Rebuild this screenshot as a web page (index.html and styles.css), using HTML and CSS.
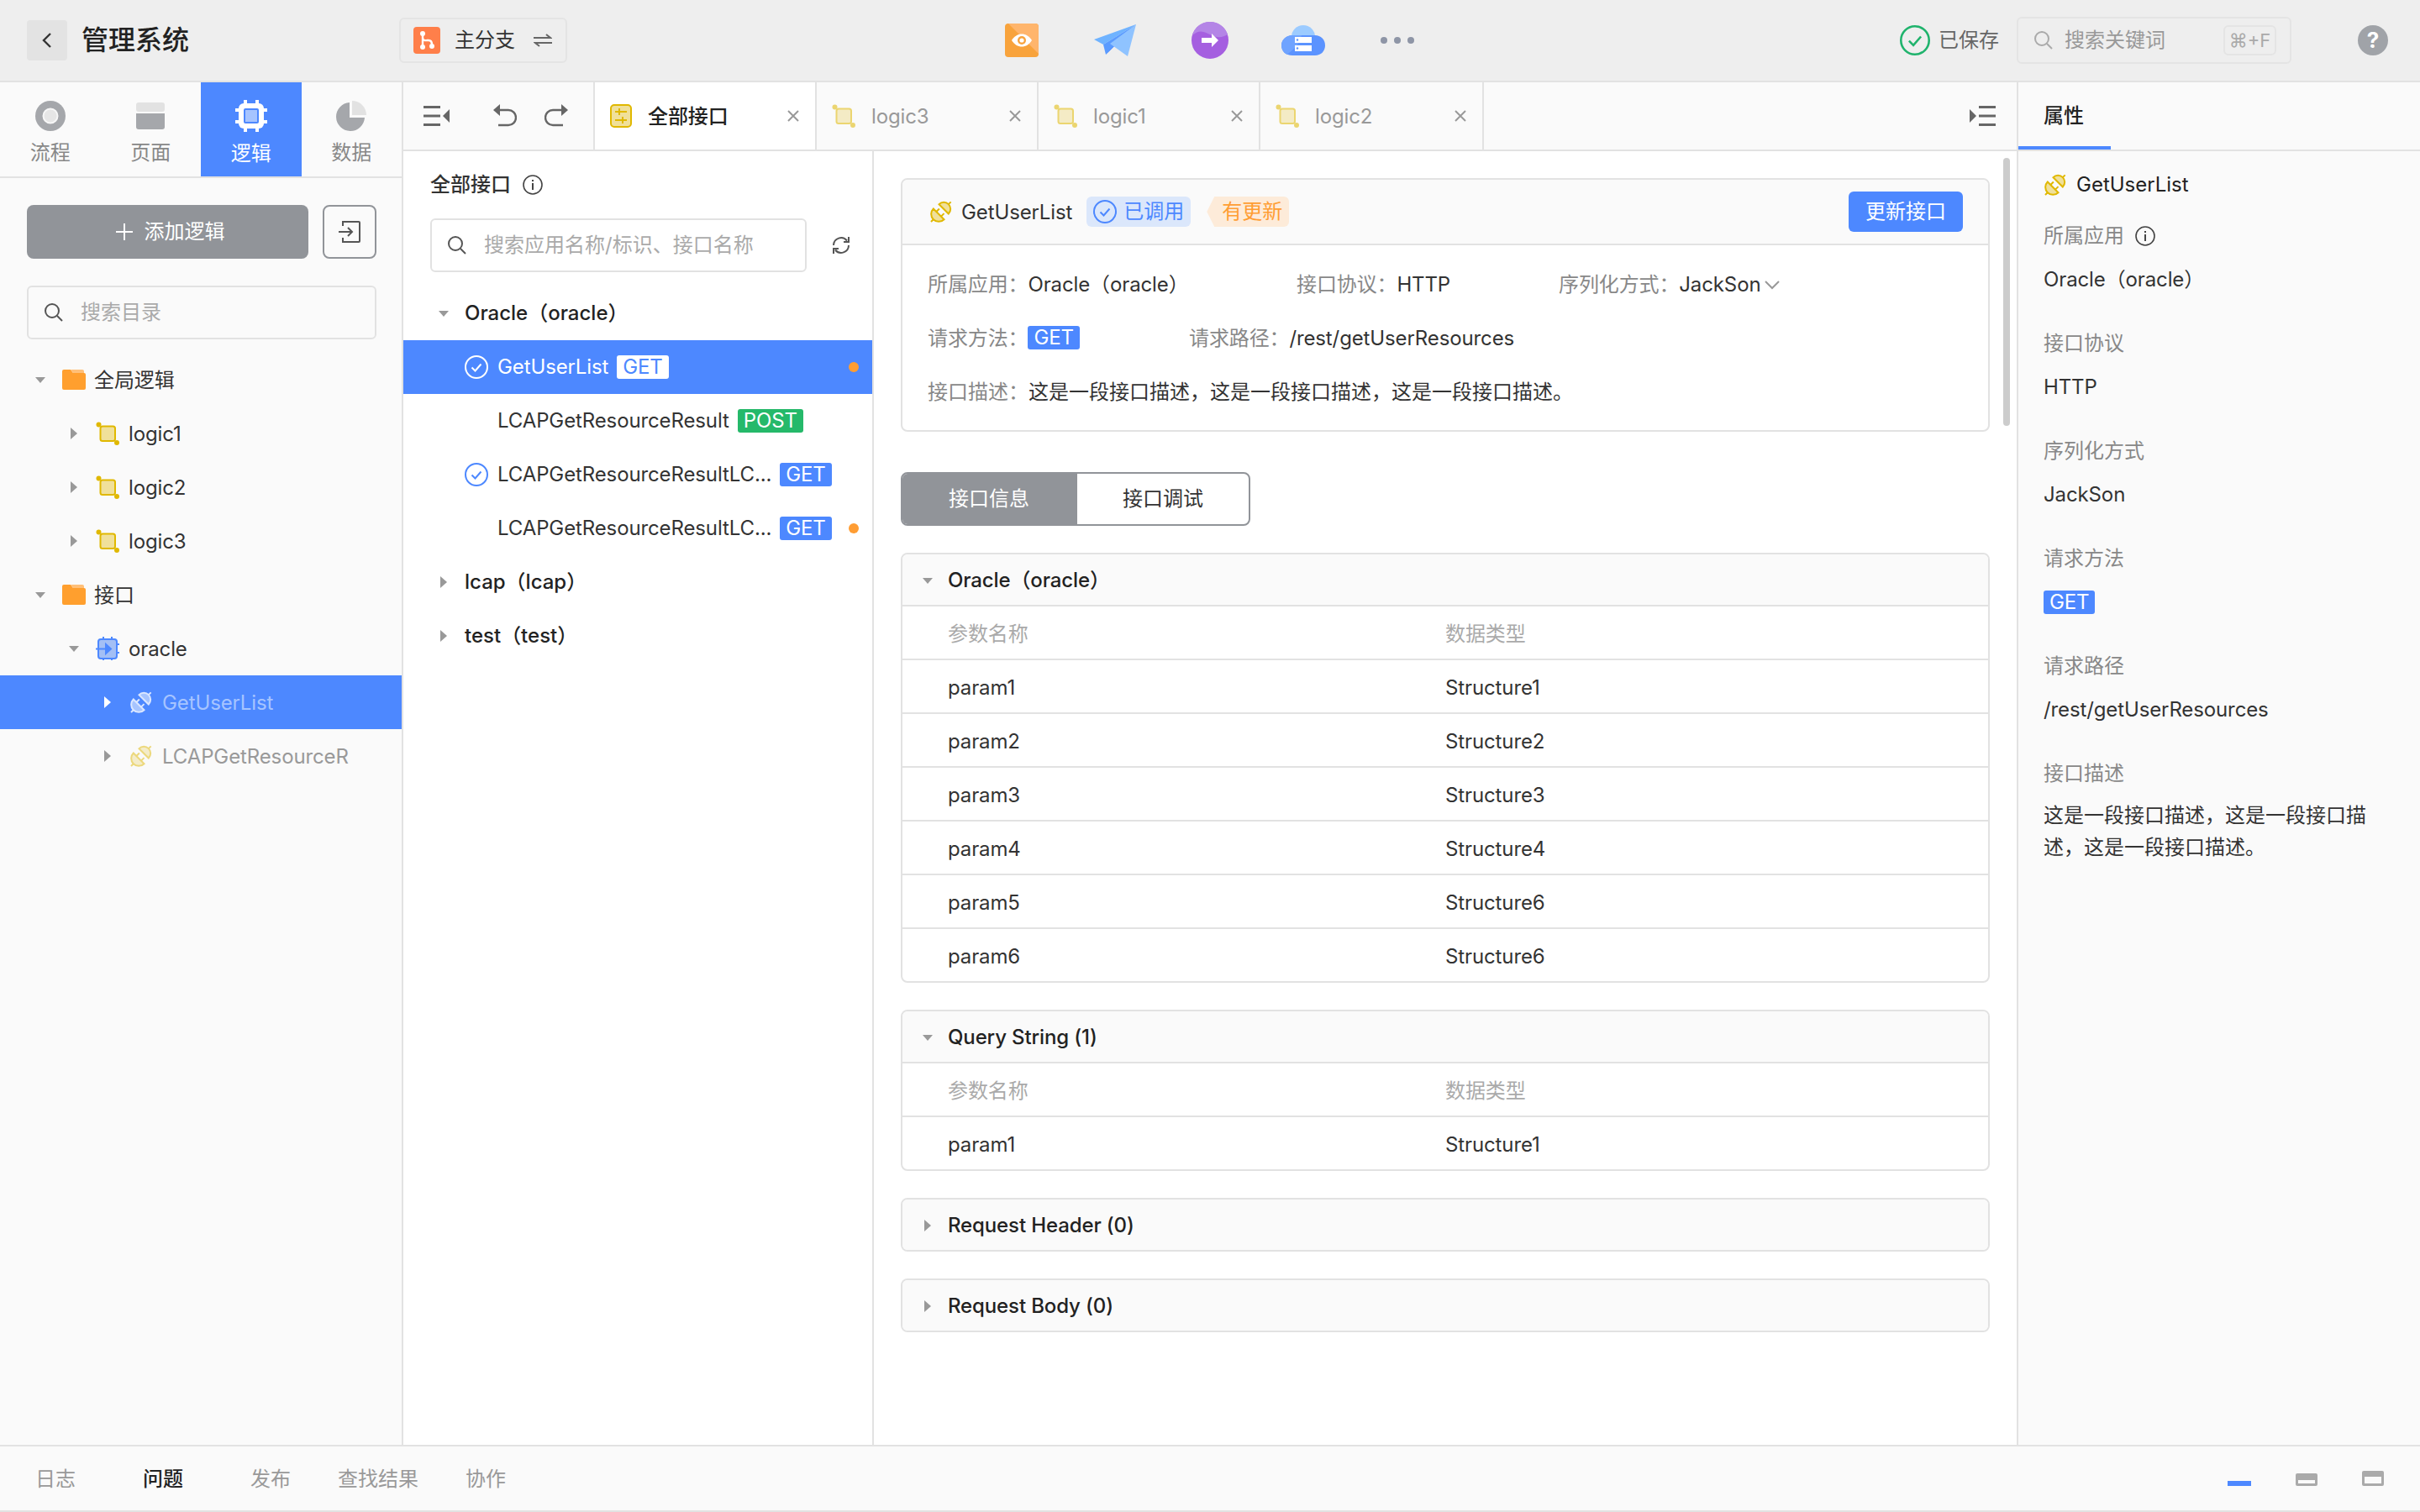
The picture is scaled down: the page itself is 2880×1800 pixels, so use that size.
FILE: index.html
```html
<!DOCTYPE html>
<html lang="zh-CN">
<head>
  <meta charset="UTF-8" />
  <title>管理系统</title>
  <link rel="stylesheet" href="styles.css">
</head>
<body>
  <!-- shared icons -->
  <svg class="defs" width="0" height="0">
    <symbol id="i-logic" viewBox="0 0 28 28">
      <rect x="5.500" y="5.500" width="17.500" height="17.500" rx="2.500" fill="#f0e09a" stroke="#e0b800" stroke-width="2"/>
      <circle cx="3.500" cy="3.500" r="3" fill="#e0b800"/>
      <circle cx="25" cy="25" r="3" fill="#e0b800"/>
    </symbol>
    <symbol id="i-plug" viewBox="0 0 28 28">
      <g transform="rotate(45 14 14)" fill="#f0e09a" stroke="#e0b800" stroke-width="2">
        <path d="M6 9.500a8 8 0 0 1 16 0z"/>
        <path d="M5 18h18a9 9 0 0 1-18 0z"/>
        <path d="M10 18v-5M18 18v-5M14 1.500v-4M14 27v4" fill="none"/>
      </g>
    </symbol>
    <symbol id="i-plug-light" viewBox="0 0 28 28">
      <g transform="rotate(45 14 14)" fill="#a6c4ff" stroke="#dbe7ff" stroke-width="2">
        <path d="M6 9.500a8 8 0 0 1 16 0z"/>
        <path d="M5 18h18a9 9 0 0 1-18 0z"/>
        <path d="M10 18v-5M18 18v-5M14 1.500v-4M14 27v4" fill="none"/>
      </g>
    </symbol>
    <symbol id="i-search" viewBox="0 0 24 24">
      <circle cx="10" cy="10" r="8" fill="none" stroke="currentColor" stroke-width="2"/>
      <path d="M16 16l6 6" stroke="currentColor" stroke-width="2" fill="none"/>
    </symbol>
    <symbol id="i-info" viewBox="0 0 24 24">
      <circle cx="12" cy="12" r="11" fill="none" stroke="#444" stroke-width="1.600"/>
      <rect x="11" y="10" width="2" height="8" fill="#444"/>
      <rect x="11" y="6" width="2" height="2" fill="#444"/>
    </symbol>
    <symbol id="i-check" viewBox="0 0 28 28">
      <circle cx="14" cy="14" r="13" fill="none" stroke="currentColor" stroke-width="2"/>
      <path d="M8.500 14.500l4 4 7-8" fill="none" stroke="currentColor" stroke-width="2"/>
    </symbol>
    <symbol id="i-folder" viewBox="0 0 28 24">
      <path d="M2 0h8l3 4h13a2 2 0 0 1 2 2v16a2 2 0 0 1-2 2H2a2 2 0 0 1-2-2V2a2 2 0 0 1 2-2z" fill="#ff9f2e"/>
      <path d="M10 0h14a2 2 0 0 1 2 2v2H13z" fill="#ffc079"/>
    </symbol>
    <symbol id="i-close" viewBox="0 0 16 16">
      <path d="M2 2l12 12M14 2L2 14" stroke="#999" stroke-width="2" fill="none"/>
    </symbol>
  </svg>

  <div class="app">
    <!-- Top bar -->
    <header class="topbar">
      <button class="back-btn">
        <svg width="14" height="20" viewBox="0 0 14 20"><path d="M11 2L3 10l8 8" fill="none" stroke="#333" stroke-width="2.400"/></svg>
      </button>
      <div class="app-title">管理系统</div>
      <div class="branch">
        <svg class="branch-icon" width="32" height="32" viewBox="0 0 32 32">
          <rect width="32" height="32" rx="4" fill="#ff7f4a"/>
          <path d="M11 9v15M11 13c0 4 4 3 7 3 3 0 4 2 4 5" fill="none" stroke="#fff" stroke-width="2.400"/>
          <circle cx="11" cy="8" r="3" fill="#fff"/><circle cx="11" cy="24" r="3" fill="#fff"/><circle cx="22" cy="23" r="3" fill="#fff"/>
        </svg>
        <span class="branch-name">主分支</span>
        <svg width="22" height="16" viewBox="0 0 22 16"><path d="M0 5h20l-5-4M22 11H2l5 4" fill="none" stroke="#666" stroke-width="2"/></svg>
      </div>

      <div class="tool-icons">
        <svg width="40" height="40" viewBox="0 0 40 40">
          <rect width="40" height="40" rx="4" fill="#f8a33c"/>
          <path d="M4 0h32a4 4 0 0 1 4 4v32z" fill="#ffb56c"/>
          <path d="M8 20c6-10 18-10 24 0-6 10-18 10-24 0z" fill="#fff"/>
          <circle cx="20" cy="20" r="5" fill="#f8a33c"/><circle cx="20" cy="20" r="2.600" fill="#fff"/>
        </svg>
        <svg width="50" height="38" viewBox="0 0 50 38">
          <path d="M50 0L0 18l11 6z" fill="#6fb3ff"/>
          <path d="M50 0L11 24l3 12z" fill="#5a9bff"/>
          <path d="M50 0L14 36l5-6z" fill="#4d88ff"/>
          <path d="M50 0L19 23l21 15z" fill="#8fc3ff"/>
        </svg>
        <svg width="44" height="44" viewBox="0 0 44 44">
          <circle cx="22" cy="22" r="22" fill="#a55fe0"/>
          <path d="M1 16C10 8 16 12 24 16s14 2 19-1C40 6 32 0 22 0S4 6 1 16z" fill="#b485e6"/>
          <path d="M12 19h12v-5l8 8-8 8v-5H12z" fill="#fff"/>
        </svg>
        <svg class="tool-cloud" width="52" height="36" viewBox="0 0 52 36">
          <circle cx="26" cy="14" r="14" fill="#9ccbff"/>
          <path d="M13 12c-7 0-13 5-13 12s5 12 13 12h27c7 0 12-5 12-12s-5-12-12-12H13z" fill="#5b93ff"/>
          <path d="M13 12c-7 0-13 5-13 12 0 5 3 9 7 11 5-5 14-10 17-23z" fill="#6fa3ff"/>
          <rect x="16" y="14" width="20" height="7" fill="#fff"/><rect x="16" y="24" width="20" height="7" fill="#fff"/>
          <circle cx="19" cy="17.500" r="1.200" fill="#5b93ff"/><circle cx="19" cy="27.500" r="1.200" fill="#5b93ff"/>
        </svg>
        <div class="dots"><span></span><span></span><span></span></div>
      </div>

      <div class="saved">
        <svg class="saved-icon" width="36" height="36"><use href="#i-check"/></svg>
        <span>已保存</span>
      </div>
      <div class="top-search">
        <svg class="top-search-icon" width="24" height="24"><use href="#i-search"/></svg>
        <span class="top-search-text">搜索关键词</span>
        <span class="kbd">⌘+F</span>
      </div>
      <div class="help">?</div>
    </header>

    <div class="main">
      <!-- Left sidebar -->
      <aside class="sidebar">
        <nav class="side-tabs">
          <div class="side-tab">
            <svg width="36" height="36" viewBox="0 0 36 36"><circle cx="18" cy="18" r="18" fill="#a5a7ab"/><circle cx="18" cy="18" r="8.500" fill="#e6e6e6" stroke="#f7f7f7" stroke-width="2"/></svg>
            <span>流程</span>
          </div>
          <div class="side-tab">
            <svg width="36" height="36" viewBox="0 0 36 36"><rect x="1" y="2" width="34" height="11" rx="3" fill="#e2e2e2"/><path d="M1 15h34v16a3 3 0 0 1-3 3H4a3 3 0 0 1-3-3z" fill="#a5a7ab"/></svg>
            <span>页面</span>
          </div>
          <div class="side-tab active">
            <svg width="38" height="38" viewBox="0 0 38 38">
              <rect x="4" y="4" width="30" height="30" rx="6" fill="#fff"/>
              <path d="M12 0v6M26 0v6M12 32v6M26 32v6M0 12h6M0 26h6M32 12h6M32 26h6" stroke="#fff" stroke-width="4"/>
              <rect x="11" y="11" width="16" height="16" rx="1" fill="#a6c4ff" stroke="#4d88ff" stroke-width="2"/>
            </svg>
            <span>逻辑</span>
          </div>
          <div class="side-tab">
            <svg width="36" height="36" viewBox="0 0 36 36"><path d="M16 2a17 17 0 1 0 18 18H16z" fill="#a5a7ab"/><path d="M19 0a17 17 0 0 1 17 17H19z" fill="#e2e2e2"/></svg>
            <span>数据</span>
          </div>
        </nav>

        <div class="side-actions">
          <button class="add-btn">
            <svg width="20" height="20" viewBox="0 0 20 20"><path d="M10 0v20M0 10h20" stroke="#fff" stroke-width="2"/></svg>
            添加逻辑
          </button>
          <button class="import-btn">
            <svg width="26" height="28" viewBox="0 0 26 28"><path d="M5 7V2h19a1 1 0 0 1 1 1v22a1 1 0 0 1-1 1H5v-5M0 14h16M11 9l5 5-5 5" fill="none" stroke="#555" stroke-width="2"/></svg>
          </button>
        </div>

        <div class="search-box side-search">
          <svg class="search-icon" width="24" height="24"><use href="#i-search"/></svg>
          <span class="placeholder">搜索目录</span>
        </div>

        <div class="tree">
          <div class="tree-row lv0">
            <i class="arrow-down"></i>
            <svg class="tree-icon" width="28" height="24"><use href="#i-folder"/></svg>
            <span>全局逻辑</span>
          </div>
          <div class="tree-row lv1">
            <i class="arrow-right"></i>
            <svg class="tree-icon" width="28" height="28"><use href="#i-logic"/></svg>
            <span>logic1</span>
          </div>
          <div class="tree-row lv1">
            <i class="arrow-right"></i>
            <svg class="tree-icon" width="28" height="28"><use href="#i-logic"/></svg>
            <span>logic2</span>
          </div>
          <div class="tree-row lv1">
            <i class="arrow-right"></i>
            <svg class="tree-icon" width="28" height="28"><use href="#i-logic"/></svg>
            <span>logic3</span>
          </div>
          <div class="tree-row lv0">
            <i class="arrow-down"></i>
            <svg class="tree-icon" width="28" height="24"><use href="#i-folder"/></svg>
            <span>接口</span>
          </div>
          <div class="tree-row lv1">
            <i class="arrow-down"></i>
            <svg class="tree-icon" width="28" height="28" viewBox="0 0 28 28">
              <rect x="3" y="3" width="22" height="23" rx="3" fill="#a3bff5" stroke="#4d88ff" stroke-width="2"/>
              <path d="M9 0v3M19 0v3M9 26v2M19 26v2M25 9h3M25 19h3" stroke="#4d88ff" stroke-width="2"/>
              <path d="M0 14.500h14M12 9l6 5.500-6 5.500z" stroke="#4d88ff" stroke-width="2" fill="#4d88ff"/>
            </svg>
            <span>oracle</span>
          </div>
          <div class="tree-row lv2 selected">
            <i class="arrow-right"></i>
            <svg class="tree-icon" width="28" height="28"><use href="#i-plug-light"/></svg>
            <span>GetUserList</span>
          </div>
          <div class="tree-row lv2 dim">
            <i class="arrow-right"></i>
            <svg class="tree-icon" width="28" height="28"><use href="#i-plug"/></svg>
            <span>LCAPGetResourceR</span>
          </div>
        </div>
      </aside>

      <!-- Center -->
      <section class="center">
        <div class="editor-tabs">
          <div class="tab-tools">
            <svg class="tool-collapse" width="32" height="24" viewBox="0 0 32 24">
              <path d="M0 1.500h20M0 12h20M0 22.500h20" stroke="#666" stroke-width="3"/>
              <path d="M31 4v16l-8-8z" fill="#666"/>
            </svg>
            <svg class="tool-undo" width="28" height="28" viewBox="0 0 28 28">
              <path d="M7 7h11a8.500 8.500 0 0 1 0 18H6" fill="none" stroke="#666" stroke-width="2.400"/>
              <path d="M8 0v14L0 7z" fill="#666"/>
            </svg>
            <svg class="tool-redo" width="28" height="28" viewBox="0 0 28 28">
              <path d="M21 7H10a8.500 8.500 0 0 0 0 18h12" fill="none" stroke="#666" stroke-width="2.400"/>
              <path d="M20 0v14l8-7z" fill="#666"/>
            </svg>
          </div>
          <div class="etab active">
            <svg class="etab-icon" width="26" height="28" viewBox="0 0 26 28">
              <rect x="1" y="1" width="24" height="26" rx="4" fill="#f0e09a" stroke="#e0b800" stroke-width="2"/>
              <path d="M6 9h14M6 19h14M11 5v8M15 15v8" stroke="#e0b800" stroke-width="2"/>
            </svg>
            <span class="etab-name">全部接口</span>
            <svg class="etab-close" width="16" height="16"><use href="#i-close"/></svg>
          </div>
          <div class="etab">
            <svg class="etab-icon faded" width="28" height="28"><use href="#i-logic"/></svg>
            <span class="etab-name">logic3</span>
            <svg class="etab-close" width="16" height="16"><use href="#i-close"/></svg>
          </div>
          <div class="etab">
            <svg class="etab-icon faded" width="28" height="28"><use href="#i-logic"/></svg>
            <span class="etab-name">logic1</span>
            <svg class="etab-close" width="16" height="16"><use href="#i-close"/></svg>
          </div>
          <div class="etab">
            <svg class="etab-icon faded" width="28" height="28"><use href="#i-logic"/></svg>
            <span class="etab-name">logic2</span>
            <svg class="etab-close" width="16" height="16"><use href="#i-close"/></svg>
          </div>
          <svg class="tool-expand" width="32" height="24" viewBox="0 0 32 24">
            <path d="M12 1.500h20M12 12h20M12 22.500h20" stroke="#666" stroke-width="3"/>
            <path d="M1 4v16l8-8z" fill="#666"/>
          </svg>
        </div>

        <div class="editor-body">
          <!-- Interface list -->
          <div class="api-list">
            <div class="api-title">全部接口
              <svg width="24" height="24"><use href="#i-info"/></svg>
            </div>
            <div class="api-search">
              <div class="search-box">
                <svg class="search-icon" width="24" height="24"><use href="#i-search"/></svg>
                <span class="placeholder">搜索应用名称/标识、接口名称</span>
              </div>
              <svg class="refresh" width="22" height="22" viewBox="0 0 22 22">
                <path d="M2 11a9 9 0 0 1 16-5.500M20 11a9 9 0 0 1-16 5.500" fill="none" stroke="#555" stroke-width="2"/>
                <path d="M20 1v6h-6M2 21v-6h6" fill="none" stroke="#555" stroke-width="2"/>
              </svg>
            </div>
            <div class="api-group"><i class="arrow-down"></i>Oracle（oracle）</div>
            <div class="api-row current">
              <svg class="api-check" width="28" height="28"><use href="#i-check"/></svg>
              <span>GetUserList</span><b class="tag tag-get">GET</b>
              <i class="dot"></i>
            </div>
            <div class="api-row">
              <span class="no-check">LCAPGetResourceResult</span><b class="tag tag-post">POST</b>
            </div>
            <div class="api-row">
              <svg class="api-check" width="28" height="28"><use href="#i-check"/></svg>
              <span>LCAPGetResourceResultLC...</span><b class="tag tag-get">GET</b>
            </div>
            <div class="api-row">
              <span class="no-check">LCAPGetResourceResultLC...</span><b class="tag tag-get">GET</b>
              <i class="dot"></i>
            </div>
            <div class="api-group"><i class="arrow-right"></i>lcap（lcap）</div>
            <div class="api-group"><i class="arrow-right"></i>test（test）</div>
          </div>

          <!-- Detail -->
          <div class="detail">
            <div class="api-card">
              <div class="api-card-head">
                <svg width="28" height="28"><use href="#i-plug"/></svg>
                <span class="api-card-name">GetUserList</span>
                <span class="badge-called">
                  <svg width="28" height="28"><use href="#i-check"/></svg>已调用
                </span>
                <span class="badge-update">有更新</span>
                <button class="update-btn">更新接口</button>
              </div>
              <div class="api-card-body">
                <div class="meta-row">
                  <div class="meta meta-app"><label>所属应用：</label>Oracle（oracle）</div>
                  <div class="meta meta-proto"><label>接口协议：</label>HTTP</div>
                  <div class="meta"><label>序列化方式：</label>JackSon
                    <svg class="chevron" width="18" height="12" viewBox="0 0 18 12"><path d="M1 2l8 8 8-8" fill="none" stroke="#999" stroke-width="2"/></svg>
                  </div>
                </div>
                <div class="meta-row">
                  <div class="meta meta-method"><label>请求方法：</label><b class="tag tag-get">GET</b></div>
                  <div class="meta"><label>请求路径：</label>/rest/getUserResources</div>
                </div>
                <div class="meta-row">
                  <div class="meta meta-desc"><label>接口描述：</label>这是一段接口描述，这是一段接口描述，这是一段接口描述。</div>
                </div>
              </div>
            </div>

            <div class="segment">
              <div class="segment-item on">接口信息</div>
              <div class="segment-item">接口调试</div>
            </div>

            <div class="panel">
              <div class="panel-head"><i class="arrow-down"></i>Oracle（oracle）</div>
              <div class="panel-row panel-th"><span>参数名称</span><span>数据类型</span></div>
              <div class="panel-row"><span>param1</span><span>Structure1</span></div>
              <div class="panel-row"><span>param2</span><span>Structure2</span></div>
              <div class="panel-row"><span>param3</span><span>Structure3</span></div>
              <div class="panel-row"><span>param4</span><span>Structure4</span></div>
              <div class="panel-row"><span>param5</span><span>Structure6</span></div>
              <div class="panel-row"><span>param6</span><span>Structure6</span></div>
            </div>

            <div class="panel">
              <div class="panel-head"><i class="arrow-down"></i>Query String (1)</div>
              <div class="panel-row panel-th"><span>参数名称</span><span>数据类型</span></div>
              <div class="panel-row"><span>param1</span><span>Structure1</span></div>
            </div>

            <div class="panel">
              <div class="panel-head"><i class="arrow-right"></i>Request Header (0)</div>
            </div>

            <div class="panel">
              <div class="panel-head"><i class="arrow-right"></i>Request Body (0)</div>
            </div>

            <div class="scrollbar"></div>
          </div>
        </div>
      </section>

      <!-- Right properties -->
      <aside class="props">
        <div class="props-tabs"><div class="props-tab">属性</div></div>
        <div class="props-body">
          <div class="props-name">
            <svg width="28" height="28"><use href="#i-plug"/></svg>
            <span>GetUserList</span>
          </div>
          <div class="prop">
            <div class="prop-label">所属应用 <svg width="24" height="24"><use href="#i-info"/></svg></div>
            <div class="prop-value">Oracle（oracle）</div>
          </div>
          <div class="prop">
            <div class="prop-label">接口协议</div>
            <div class="prop-value">HTTP</div>
          </div>
          <div class="prop">
            <div class="prop-label">序列化方式</div>
            <div class="prop-value">JackSon</div>
          </div>
          <div class="prop">
            <div class="prop-label">请求方法</div>
            <div class="prop-value"><b class="tag tag-get">GET</b></div>
          </div>
          <div class="prop">
            <div class="prop-label">请求路径</div>
            <div class="prop-value">/rest/getUserResources</div>
          </div>
          <div class="prop">
            <div class="prop-label">接口描述</div>
            <div class="prop-desc">这是一段接口描述，这是一段接口描述，这是一段接口描述。</div>
          </div>
        </div>
      </aside>
    </div>

    <!-- Bottom bar -->
    <footer class="bottombar">
      <div class="bottom-tab">日志</div>
      <div class="bottom-tab active">问题</div>
      <div class="bottom-tab">发布</div>
      <div class="bottom-tab">查找结果</div>
      <div class="bottom-tab">协作</div>
      <div class="bottom-icons">
        <div class="size-min"></div>
        <svg width="26" height="15" viewBox="0 0 26 15"><rect width="26" height="15" rx="2" fill="#aaa"/><rect x="3" y="8" width="20" height="4" fill="#fafafa"/></svg>
        <svg width="26" height="18" viewBox="0 0 26 18"><rect width="26" height="18" rx="2" fill="#aaa"/><rect x="3" y="7" width="20" height="8" fill="#fafafa"/></svg>
      </div>
    </footer>
  </div>
</body>
</html>
```

FILE: styles.css
```css
:root {
  --accent: #4d88ff;
  --line: #e2e2e2;
  --panel-bg: #fafafa;
  --gray-btn: #919499;
  --text: #333;
  --muted: #888;
}

* {
  box-sizing: border-box;
}

body {
  margin: 0;
  font-family: Inter, "Noto Sans CJK SC", sans-serif;
  font-size: 24px;
  line-height: 32px;
  color: var(--text);
  background: #fff;
}

button {
  font: inherit;
  border: none;
  padding: 0;
  cursor: pointer;
}

svg {
  display: block;
  flex: none;
}

.defs {
  position: absolute;
}

.app {
  display: flex;
  flex-direction: column;
  height: 1800px;
  overflow: hidden;
}

/* Top bar */
.topbar {
  display: flex;
  align-items: center;
  flex: none;
  height: 98px;
  padding: 0 38px 0 32px;
  background: #eee;
  border-bottom: 2px solid var(--line);
}

.back-btn {
  display: flex;
  align-items: center;
  justify-content: center;
  width: 48px;
  height: 48px;
  border-radius: 4px;
  background: #e3e3e3;
}

.app-title {
  margin-left: 17px;
  font-size: 32px;
  font-weight: 500;
  color: #222;
}

.branch {
  display: flex;
  align-items: center;
  width: 200px;
  height: 54px;
  margin-left: 250px;
  padding-left: 15px;
  border: 2px solid #e4e4e4;
  border-radius: 6px;
}

.branch-name {
  margin: 0 22px 0 17px;
}

.tool-icons {
  display: flex;
  align-items: center;
  gap: 66px;
  margin-left: 521px;
}

.tool-cloud {
  margin-left: -3px;
}

.dots {
  display: flex;
  gap: 8px;
}

.dots span {
  width: 8px;
  height: 8px;
  border-radius: 50%;
  background: #8e95a6;
}

.saved {
  display: flex;
  align-items: center;
  gap: 10px;
  margin-left: auto;
  color: #666;
}

.saved-icon {
  color: #1fb36c;
}

.top-search {
  display: flex;
  align-items: center;
  width: 327px;
  height: 56px;
  margin-left: 21px;
  padding: 0 16px 0 18px;
  border: 2px solid #e4e4e4;
  border-radius: 6px;
  color: #999;
}

.top-search-icon {
  color: #aaa;
}

.top-search-text {
  margin-left: 13px;
}

.kbd {
  display: flex;
  align-items: center;
  justify-content: center;
  width: 63px;
  height: 36px;
  margin-left: auto;
  border: 2px solid #e4e4e4;
  border-radius: 6px;
  font-size: 22px;
  color: #aaa;
}

.help {
  display: flex;
  align-items: center;
  justify-content: center;
  width: 36px;
  height: 36px;
  margin-left: 79px;
  border-radius: 50%;
  background: #a0a3a8;
  color: #fff;
  font-size: 26px;
  font-weight: 700;
}

/* Layout */
.main {
  display: flex;
  flex: 1;
  min-height: 0;
}

/* Left sidebar */
.sidebar {
  flex: none;
  width: 480px;
  background: var(--panel-bg);
  border-right: 2px solid var(--line);
}

.side-tabs {
  display: flex;
  height: 114px;
  border-bottom: 2px solid var(--line);
}

.side-tab {
  display: flex;
  flex-direction: column;
  align-items: center;
  width: 120px;
  height: 112px;
  padding-top: 22px;
  color: var(--muted);
}

.side-tab span {
  margin-top: 6px;
  line-height: 40px;
}

.side-tab.active {
  padding-top: 21px;
  background: var(--accent);
  color: #fff;
}

.side-actions {
  display: flex;
  gap: 17px;
  margin: 32px 30px 32px 32px;
}

.add-btn {
  display: flex;
  align-items: center;
  justify-content: center;
  gap: 14px;
  width: 335px;
  height: 64px;
  padding-left: 6px;
  border-radius: 8px;
  background: var(--gray-btn);
  color: #fff;
}

.import-btn {
  display: flex;
  align-items: center;
  justify-content: center;
  width: 64px;
  height: 64px;
  border: 2px solid var(--gray-btn);
  border-radius: 8px;
  background: transparent;
}

.search-box {
  display: flex;
  align-items: center;
  height: 64px;
  padding-left: 18px;
  border: 2px solid var(--line);
  border-radius: 6px;
}

.search-icon {
  color: #555;
}

.placeholder {
  margin-left: 20px;
  color: #aaa;
}

.side-search {
  width: 416px;
  margin-left: 32px;
  margin-bottom: 16px;
}

.tree-row {
  display: flex;
  align-items: center;
  height: 64px;
  color: var(--text);
}

.lv0 { padding-left: 40px; }
.lv1 { padding-left: 80px; }
.lv2 { padding-left: 120px; }

.tree-row > i {
  margin-right: 18px;
}

.tree-row > span {
  padding-top: 2px;
  letter-spacing: -0.12px;
}

.tree-icon {
  margin-right: 11px;
}

.lv0 .tree-icon {
  margin-right: 10px;
}

.tree-row.selected {
  background: var(--accent);
  color: #a6c4ff;
}

.tree-row.selected .arrow-right::after {
  border-left-color: #fff;
}

.tree-row.dim {
  color: #999;
}

.tree-row.dim .tree-icon {
  opacity: 0.5;
}

.arrow-down,
.arrow-right {
  display: flex;
  justify-content: center;
  flex: none;
  width: 16px;
  height: 0;
}

.arrow-down::after {
  content: "";
  height: 0;
  margin-top: -3px;
  border-left: 6px solid transparent;
  border-right: 6px solid transparent;
  border-top: 7px solid #999;
}

.arrow-right::after {
  content: "";
  height: 0;
  margin-top: -7px;
  border-top: 7px solid transparent;
  border-bottom: 7px solid transparent;
  border-left: 8px solid #999;
}

/* Center */
.center {
  display: flex;
  flex-direction: column;
  flex: 1;
  min-width: 0;
}

.editor-tabs {
  display: flex;
  align-items: stretch;
  flex: none;
  height: 82px;
  background: var(--panel-bg);
  border-bottom: 2px solid var(--line);
}

.tab-tools {
  display: flex;
  align-items: center;
  width: 228px;
  padding-left: 24px;
  border-right: 2px solid var(--line);
}

.tool-undo {
  margin-left: 51px;
}

.tool-redo {
  margin-left: 33px;
}

.etab {
  display: flex;
  align-items: center;
  width: 264px;
  padding: 0 18px;
  border-right: 2px solid var(--line);
  color: #999;
}

.etab:last-of-type {
  width: 266px;
}

.etab.active {
  background: #fff;
  color: #222;
  font-weight: 500;
}

.etab-name {
  margin-left: 19px;
  padding-top: 2px;
  letter-spacing: -0.12px;
}

.etab-close {
  margin-left: auto;
}

.etab-icon.faded {
  opacity: 0.55;
}

.tool-expand {
  align-self: center;
  margin-left: auto;
  margin-right: 25px;
}

.editor-body {
  display: flex;
  flex: 1;
  min-height: 0;
  background: #fff;
}

/* Interface list */
.api-list {
  flex: none;
  width: 560px;
  border-right: 2px solid var(--line);
}

.api-title {
  display: flex;
  align-items: center;
  gap: 14px;
  height: 40px;
  margin: 20px 0 20px 32px;
  font-weight: 500;
}

.api-search {
  display: flex;
  align-items: center;
  padding-left: 32px;
}

.api-search .search-box {
  width: 448px;
}

.refresh {
  margin-left: 30px;
}

.api-group {
  display: flex;
  align-items: center;
  height: 64px;
  padding-left: 40px;
  font-weight: 500;
  color: #222;
}

.api-group > i {
  margin-right: 17px;
}

.api-search + .api-group {
  margin-top: 17px;
}

.api-row {
  display: flex;
  align-items: center;
  height: 64px;
  padding-left: 73px;
  letter-spacing: -0.12px;
}

.api-check {
  color: var(--accent);
  margin-right: 11px;
}

.no-check {
  margin-left: 39px;
}

.api-row.current {
  background: var(--accent);
  color: #fff;
}

.api-row.current .api-check {
  color: #fff;
}

.api-row.current .tag-get {
  background: #fff;
  color: var(--accent);
}

.dot {
  width: 12px;
  height: 12px;
  margin-left: auto;
  margin-right: 16px;
  border-radius: 50%;
  background: #ff9d33;
}

.tag {
  display: inline-flex;
  align-items: center;
  height: 28px;
  padding: 0 7px;
  margin-left: 10px;
  border-radius: 3px;
  color: #fff;
  font-weight: 400;
}

.tag-get {
  background: var(--accent);
}

.tag-post {
  background: #25b96a;
}

/* Detail */
.detail {
  position: relative;
  flex: 1;
  min-width: 0;
  padding: 32px 32px 0;
}

.scrollbar {
  position: absolute;
  top: 8px;
  right: 8px;
  width: 8px;
  height: 319px;
  border-radius: 4px;
  background: #ccc;
}

.api-card {
  height: 302px;
  margin-bottom: 48px;
  border: 2px solid var(--line);
  border-radius: 8px;
}

.api-card-head {
  display: flex;
  align-items: center;
  height: 78px;
  padding: 0 30px 0 32px;
  background: var(--panel-bg);
  border-bottom: 2px solid var(--line);
  border-radius: 6px 6px 0 0;
}

.api-card-name {
  margin-left: 10px;
  padding-top: 2px;
  letter-spacing: -0.12px;
}

.badge-called {
  display: flex;
  align-items: center;
  gap: 8px;
  height: 36px;
  margin-left: 17px;
  padding: 0 8px;
  border-radius: 6px;
  background: #dbe7fb;
  color: var(--accent);
}

.badge-update {
  display: flex;
  align-items: center;
  height: 36px;
  margin-left: 19px;
  padding: 0 8px 0 18px;
  clip-path: polygon(9px 0, 100% 0, 100% 100%, 9px 100%, 0 50%);
  border-radius: 6px;
  background: #fdebd9;
  color: #ff9d33;
}

.update-btn {
  width: 136px;
  height: 48px;
  margin-left: auto;
  border-radius: 6px;
  background: var(--accent);
  color: #fff;
}

.api-card-body {
  padding: 14px 30px;
}

.meta-row {
  display: flex;
  align-items: center;
  height: 64px;
}

.meta {
  display: flex;
  align-items: center;
  padding-top: 2px;
  letter-spacing: -0.12px;
}

.meta-desc {
  letter-spacing: 0;
}

.meta label {
  color: var(--muted);
}

.meta .tag {
  margin: -2px 0 0;
}

.meta-app {
  width: 439px;
}

.meta-proto {
  width: 312px;
}

.meta-method {
  width: 311px;
}

.chevron {
  margin-left: 5px;
}

.segment {
  display: flex;
  width: 416px;
  height: 64px;
  margin-bottom: 32px;
  border: 2px solid var(--gray-btn);
  border-radius: 8px;
  overflow: hidden;
}

.segment-item {
  display: flex;
  align-items: center;
  justify-content: center;
  flex: 1;
}

.segment-item.on {
  flex: none;
  width: 208px;
  padding-right: 2px;
  background: var(--gray-btn);
  color: #fff;
}

.panel {
  margin-bottom: 32px;
  border: 2px solid var(--line);
  border-radius: 8px;
  overflow: hidden;
}

.panel-head {
  display: flex;
  align-items: center;
  height: 60px;
  padding: 2px 0 0 22px;
  background: var(--panel-bg);
  font-weight: 500;
  color: #222;
  letter-spacing: -0.12px;
}

.panel-head > i {
  margin-right: 16px;
}

.panel-row {
  display: grid;
  grid-template-columns: 592px 1fr;
  align-items: center;
  height: 64px;
  padding: 3px 0 0 54px;
  border-top: 2px solid var(--line);
  letter-spacing: -0.12px;
}

.panel-th {
  color: #aaa;
}

/* Right properties */
.props {
  flex: none;
  width: 480px;
  background: var(--panel-bg);
  border-left: 2px solid var(--line);
}

.props-tabs {
  height: 82px;
  border-bottom: 2px solid var(--line);
}

.props-tab {
  display: flex;
  align-items: center;
  justify-content: center;
  width: 110px;
  height: 80px;
  padding: 4px 2px 0 0;
  border-bottom: 4px solid var(--accent);
  color: #222;
  font-weight: 500;
}

.props-body {
  padding: 20px 30px 0;
}

.props-name {
  display: flex;
  align-items: center;
  gap: 11px;
  height: 40px;
  margin-bottom: 20px;
  color: #222;
}

.prop {
  margin-bottom: 36px;
}

.prop-label {
  display: flex;
  align-items: center;
  gap: 13px;
  height: 40px;
  margin-bottom: 12px;
  padding-top: 2px;
  color: var(--muted);
}

.prop-value {
  display: flex;
  align-items: center;
  height: 40px;
  padding-top: 2px;
  letter-spacing: -0.12px;
}

.prop-value .tag {
  margin-left: 0;
}

.prop-desc {
  width: 400px;
  margin-top: 5px;
  line-height: 38px;
}

/* Bottom bar */
.bottombar {
  display: flex;
  align-items: center;
  flex: none;
  height: 80px;
  padding-left: 2px;
  background: var(--panel-bg);
  border-top: 2px solid var(--line);
  border-bottom: 2px solid var(--line);
}

.bottom-tab {
  width: 128px;
  padding-top: 2px;
  text-align: center;
  color: #999;
}

.bottom-tab.active {
  color: #222;
  font-weight: 500;
}

.bottom-icons {
  display: flex;
  align-items: flex-end;
  gap: 53px;
  margin-left: auto;
  margin-right: 43px;
}

.size-min {
  width: 28px;
  height: 6px;
  background: var(--accent);
}
```
